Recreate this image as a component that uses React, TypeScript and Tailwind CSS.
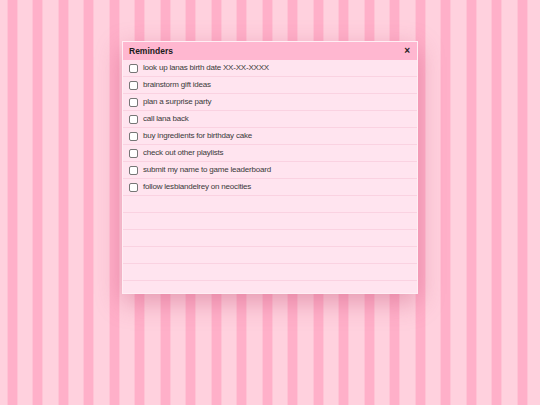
const ITEMS = [
  "look up lanas birth date XX-XX-XXXX",
  "brainstorm gift ideas",
  "plan a surprise party",
  "call lana back",
  "buy ingredients for birthday cake",
  "check out other playlists",
  "submit my name to game leaderboard",
  "follow lesbiandelrey on neocities",
];

const EMPTY_ROWS = 5;

export default function App() {
  return (
    <div
      className="w-[540px] h-[405px] flex justify-center pt-[41px] font-['Liberation_Sans',Arial,sans-serif] bg-[repeating-linear-gradient(90deg,#ffd1de_0px,#ffd1de_7px,#ffc3d5_7px,#ffc3d5_8px,#ffb0c9_8px,#ffb0c9_17px,#ffc3d5_17px,#ffc3d5_18px,#ffd1de_18px,#ffd1de_25.5px)]"
    >
      <div className="w-[296px] h-[253px] flex flex-col bg-[#ffe4ef] border border-[#ffeef4] shadow-[0_8px_24px_rgba(190,70,110,0.4)]">
        <div className="h-[18px] flex items-center justify-between pl-[6px] pr-[7px] bg-[#ffb7d0]">
          <span className="text-[8.5px] font-bold text-[#1a1a1a]">Reminders</span>
          <span className="text-[10px] font-bold leading-none text-[#222]">×</span>
        </div>
        <ul className="flex flex-col">
          {ITEMS.map((item) => (
            <li
              key={item}
              className="h-[17px] flex items-center gap-[5px] pl-[6px] border-b border-[#fad2e1]"
            >
              <span className="w-[9px] h-[9px] rounded-[2px] border border-[#767676] bg-white shrink-0" />
              <span className="text-[8px] tracking-[-0.2px] text-[#3a3a3a] leading-none">{item}</span>
            </li>
          ))}
          {Array.from({ length: EMPTY_ROWS }).map((_, i) => (
            <li key={i} className="h-[17px] border-b border-[#fad2e1]" />
          ))}
        </ul>
      </div>
    </div>
  );
}
